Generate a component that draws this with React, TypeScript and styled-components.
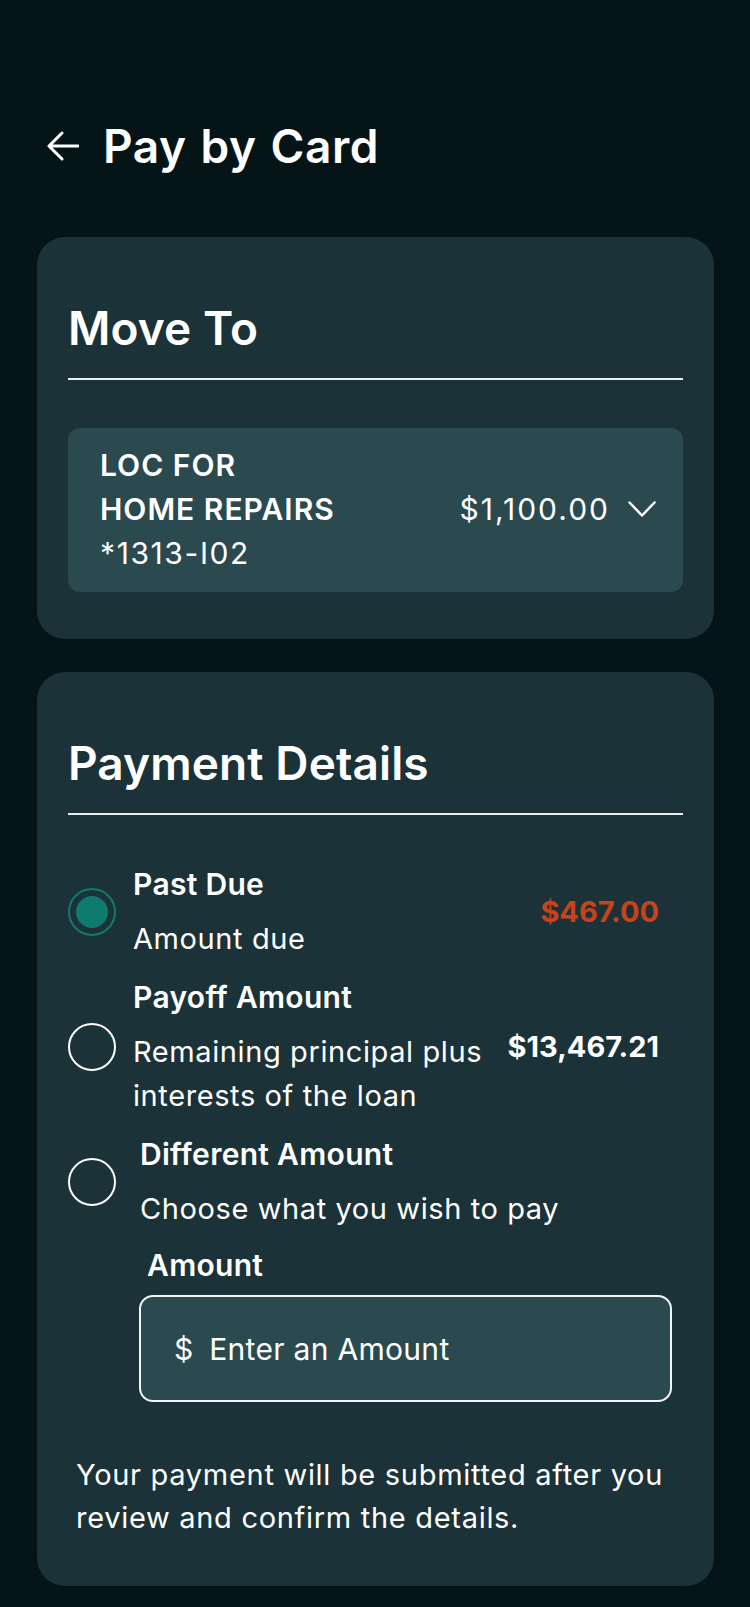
import React, { useState } from "react";
import styled, { createGlobalStyle } from "styled-components";

const GlobalStyle = createGlobalStyle`
  html, body {
    margin: 0;
    padding: 0;
    background: #051417;
  }
  body {
    font-family: Inter, "Noto Sans", sans-serif;
    color: #ffffff;
  }
`;

const Page = styled.div`
  min-height: 1607px;
  background: #051417;
  padding: 120px 36px 20px 37px;
  box-sizing: border-box;
`;

const Header = styled.div`
  display: flex;
  align-items: center;
  gap: 24px;
  height: 52px;
  margin: 0 0 65px 10px;
`;

const BackButton = styled.button`
  display: flex;
  align-items: center;
  justify-content: center;
  background: none;
  border: none;
  padding: 0;
  width: 32px;
  height: 32px;
  cursor: pointer;
`;

const Title = styled.h1`
  margin: 0;
  font-size: 46px;
  line-height: 52px;
  font-weight: 600;
  letter-spacing: 0.5px;
  word-spacing: 2px;
`;

const Card = styled.section`
  background: #1b3338;
  border-radius: 28px;
  padding: 64px 31px 47px;
  & + & {
    margin-top: 33px;
  }
`;

const CardTitle = styled.h2`
  margin: 0;
  font-size: 46px;
  line-height: 54px;
  font-weight: 600;
  letter-spacing: 0.1px;
`;

const Divider = styled.hr`
  border: none;
  height: 2px;
  background: #e9eeee;
  margin: 23px 0 0;
`;

const AccountBox = styled.div`
  margin-top: 48px;
  background: #2a4a50;
  border-radius: 12px;
  padding: 15px 27px 17px 32px;
  display: flex;
  align-items: center;
  justify-content: space-between;
`;

const AccountName = styled.div`
  font-size: 30px;
  line-height: 44px;
  font-weight: 600;
  letter-spacing: 1px;
`;

const AccountNumber = styled.div`
  font-size: 30px;
  line-height: 44px;
  font-weight: 400;
  letter-spacing: 1.6px;
`;

const Balance = styled.div`
  display: flex;
  align-items: center;
  gap: 18px;
  font-size: 30px;
  line-height: 44px;
  letter-spacing: 2px;
`;

const Options = styled.div`
  margin-top: 47px;
  display: flex;
  flex-direction: column;
  gap: 14px;
`;

const OptionRow = styled.label`
  display: flex;
  align-items: center;
  cursor: pointer;
`;

const Radio = styled.span<{ checked: boolean }>`
  flex: 0 0 auto;
  width: 48px;
  height: 48px;
  box-sizing: border-box;
  border-radius: 50%;
  border: 2px solid ${({ checked }) => (checked ? "#0f7a6d" : "#ffffff")};
  display: flex;
  align-items: center;
  justify-content: center;
  &::after {
    content: "";
    width: 32px;
    height: 32px;
    border-radius: 50%;
    background: ${({ checked }) => (checked ? "#0e7b6e" : "transparent")};
  }
`;

const OptionText = styled.div<{ indent: number }>`
  flex: 1;
  margin-left: ${({ indent }) => indent}px;
`;

const OptionTitle = styled.div`
  font-size: 30px;
  line-height: 44px;
  font-weight: 600;
  letter-spacing: 0.3px;
`;

const OptionSub = styled.div`
  margin-top: 11px;
  font-size: 29px;
  line-height: 44px;
  font-weight: 400;
  letter-spacing: 0.6px;
`;

const OptionAmount = styled.div<{ tone: "alert" | "plain" }>`
  flex: 0 0 auto;
  padding-right: 24px;
  font-size: 29px;
  font-weight: 700;
  letter-spacing: 0px;
  color: ${({ tone }) => (tone === "alert" ? "#c8421b" : "#ffffff")};
`;

const AmountField = styled.div`
  margin: 12px 11px 0 71px;
`;

const FieldLabel = styled.div`
  padding-left: 8px;
  font-size: 30px;
  line-height: 44px;
  font-weight: 600;
  letter-spacing: 0.3px;
`;

const InputWrap = styled.div`
  margin-top: 8px;
  height: 107px;
  box-sizing: border-box;
  border: 2px solid #f1f4f4;
  border-radius: 14px;
  background: #2a4a50;
  display: flex;
  align-items: center;
  padding: 0 24px 0 33px;
  gap: 16px;
  font-size: 30px;
`;

const Currency = styled.span`
  font-size: 30px;
`;

const AmountInput = styled.input`
  flex: 1;
  min-width: 0;
  background: transparent;
  border: none;
  outline: none;
  color: #ffffff;
  font-family: Inter, "Noto Sans", sans-serif;
  font-size: 30px;
  letter-spacing: 0.3px;
  padding: 0;
  &::placeholder {
    color: #ffffff;
    opacity: 1;
  }
`;

const Notice = styled.p`
  margin: 51px 0 0 8px;
  font-size: 29px;
  line-height: 43px;
  font-weight: 400;
  letter-spacing: 0.7px;
`;

const ArrowLeft = () => (
  <svg width="32" height="30" viewBox="0 0 32 30" fill="none">
    <path
      d="M31 15H2M15 2L2 15l13 13"
      stroke="#ffffff"
      strokeWidth="3"
      strokeLinecap="round"
      strokeLinejoin="round"
    />
  </svg>
);

const Chevron = () => (
  <svg width="28" height="16" viewBox="0 0 28 16" fill="none">
    <path
      d="M1.5 1.5l12.5 13 12.5-13"
      stroke="#ffffff"
      strokeWidth="2.5"
      strokeLinecap="round"
      strokeLinejoin="round"
    />
  </svg>
);

type Choice = "pastDue" | "payoff" | "different";

const App: React.FC = () => {
  const [choice, setChoice] = useState<Choice>("pastDue");
  const [amount, setAmount] = useState("");

  return (
    <>
      <GlobalStyle />
      <Page>
        <Header>
          <BackButton aria-label="Back">
            <ArrowLeft />
          </BackButton>
          <Title>Pay by Card</Title>
        </Header>

        <Card>
          <CardTitle>Move To</CardTitle>
          <Divider />
          <AccountBox>
            <div>
              <AccountName>LOC FOR</AccountName>
              <AccountName>HOME REPAIRS</AccountName>
              <AccountNumber>*1313-I02</AccountNumber>
            </div>
            <Balance>
              $1,100.00
              <Chevron />
            </Balance>
          </AccountBox>
        </Card>

        <Card>
          <CardTitle>Payment Details</CardTitle>
          <Divider />
          <Options>
            <OptionRow onClick={() => setChoice("pastDue")}>
              <Radio checked={choice === "pastDue"} />
              <OptionText indent={17}>
                <OptionTitle>Past Due</OptionTitle>
                <OptionSub>Amount due</OptionSub>
              </OptionText>
              <OptionAmount tone="alert">$467.00</OptionAmount>
            </OptionRow>

            <OptionRow onClick={() => setChoice("payoff")}>
              <Radio checked={choice === "payoff"} />
              <OptionText indent={17}>
                <OptionTitle>Payoff Amount</OptionTitle>
                <OptionSub>
                  Remaining principal plus
                  <br />
                  interests of the loan
                </OptionSub>
              </OptionText>
              <OptionAmount tone="plain">$13,467.21</OptionAmount>
            </OptionRow>

            <OptionRow onClick={() => setChoice("different")}>
              <Radio checked={choice === "different"} />
              <OptionText indent={24}>
                <OptionTitle>Different Amount</OptionTitle>
                <OptionSub>Choose what you wish to pay</OptionSub>
              </OptionText>
            </OptionRow>
          </Options>

          <AmountField>
            <FieldLabel>Amount</FieldLabel>
            <InputWrap>
              <Currency>$</Currency>
              <AmountInput
                placeholder="Enter an Amount"
                value={amount}
                onChange={(e) => setAmount(e.target.value)}
              />
            </InputWrap>
          </AmountField>

          <Notice>
            Your payment will be submitted after you review and confirm the
            details.
          </Notice>
        </Card>
      </Page>
    </>
  );
};

export default App;
